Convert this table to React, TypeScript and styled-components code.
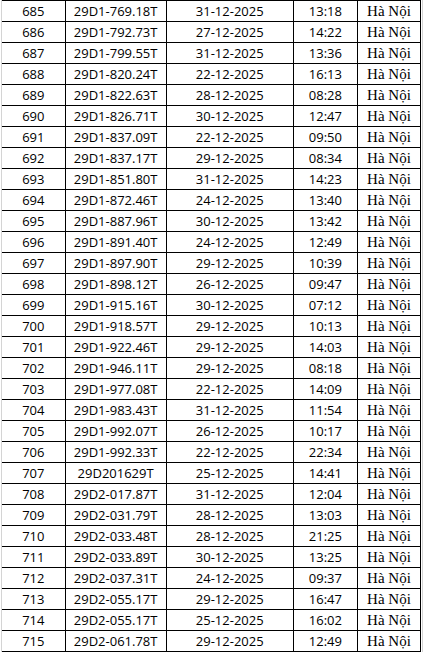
import styled, { createGlobalStyle } from 'styled-components';

const rows: [number, string, string, string][] = [
	[685, '29D1-769.18T', '31-12-2025', '13:18'],
	[686, '29D1-792.73T', '27-12-2025', '14:22'],
	[687, '29D1-799.55T', '31-12-2025', '13:36'],
	[688, '29D1-820.24T', '22-12-2025', '16:13'],
	[689, '29D1-822.63T', '28-12-2025', '08:28'],
	[690, '29D1-826.71T', '30-12-2025', '12:47'],
	[691, '29D1-837.09T', '22-12-2025', '09:50'],
	[692, '29D1-837.17T', '29-12-2025', '08:34'],
	[693, '29D1-851.80T', '31-12-2025', '14:23'],
	[694, '29D1-872.46T', '24-12-2025', '13:40'],
	[695, '29D1-887.96T', '30-12-2025', '13:42'],
	[696, '29D1-891.40T', '24-12-2025', '12:49'],
	[697, '29D1-897.90T', '29-12-2025', '10:39'],
	[698, '29D1-898.12T', '26-12-2025', '09:47'],
	[699, '29D1-915.16T', '30-12-2025', '07:12'],
	[700, '29D1-918.57T', '29-12-2025', '10:13'],
	[701, '29D1-922.46T', '29-12-2025', '14:03'],
	[702, '29D1-946.11T', '29-12-2025', '08:18'],
	[703, '29D1-977.08T', '22-12-2025', '14:09'],
	[704, '29D1-983.43T', '31-12-2025', '11:54'],
	[705, '29D1-992.07T', '26-12-2025', '10:17'],
	[706, '29D1-992.33T', '22-12-2025', '22:34'],
	[707, '29D201629T', '25-12-2025', '14:41'],
	[708, '29D2-017.87T', '31-12-2025', '12:04'],
	[709, '29D2-031.79T', '28-12-2025', '13:03'],
	[710, '29D2-033.48T', '28-12-2025', '21:25'],
	[711, '29D2-033.89T', '30-12-2025', '13:25'],
	[712, '29D2-037.31T', '24-12-2025', '09:37'],
	[713, '29D2-055.17T', '29-12-2025', '16:47'],
	[714, '29D2-055.17T', '25-12-2025', '16:02'],
	[715, '29D2-061.78T', '29-12-2025', '12:49'],
];

// column widths in px: stt, biển số, ngày, giờ, nơi
const columns = [63, 101, 127, 64, 63];

const App = () => {
	return (
		<>
			<GlobalStyle />
			<Sheet>
				<Table>
					<colgroup>
						{columns.map((w, i) => (
							<Col key={i} $w={w} />
						))}
					</colgroup>
					<tbody>
						{rows.map(([no, plate, date, time]) => (
							<tr key={no}>
								<Cell>{no}</Cell>
								<Cell>{plate}</Cell>
								<Cell>{date}</Cell>
								<Cell>{time}</Cell>
								<Cell $serif>Hà Nội</Cell>
							</tr>
						))}
					</tbody>
				</Table>
			</Sheet>
		</>
	);
};

const GlobalStyle = createGlobalStyle`
	html, body {
		margin: 0;
		padding: 0;
		background: #ffffff;
	}
`;

const Sheet = styled.div`
	box-sizing: border-box;
	width: 422px;
	height: 652px;
	margin-left: 1px;
	border-left: 1px solid #d4d4d4;
	border-right: 1px solid #d4d4d4;
	overflow: hidden;
`;

const Table = styled.table`
	table-layout: fixed;
	border-collapse: collapse;
	width: 419px;
`;

const Col = styled.col<{ $w: number }>`
	width: ${(p) => p.$w}px;
`;

const Cell = styled.td<{ $serif?: boolean }>`
	height: 20px;
	padding: 0;
	border: 1px solid #000;
	text-align: center;
	vertical-align: middle;
	color: #000;
	white-space: nowrap;
	font-family: ${(p) => (p.$serif ? '"Liberation Serif", serif' : '"Open Sans", sans-serif')};
	font-size: ${(p) => (p.$serif ? '15px' : '13px')};
	line-height: 20px;

	&:first-child {
		border-left: none;
	}
`;

export default App;
